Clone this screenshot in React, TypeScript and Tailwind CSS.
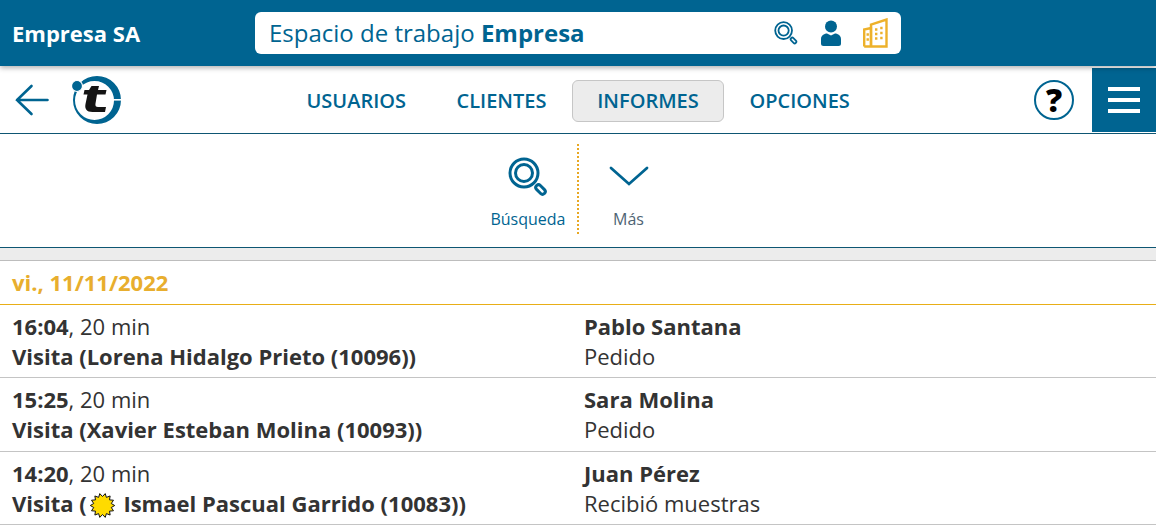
const font = { fontFamily: '"Open Sans", sans-serif' };

function SearchIcon({ className, sw }: { className: string; sw: number }) {
  return (
    <svg viewBox="0 0 40 40" className={className} fill="none" stroke="currentColor" strokeWidth={sw}>
      <circle cx="16" cy="16" r="14" />
      <circle cx="16" cy="16" r="8.500" />
      <rect x="-2.700" y="-5.500" width="5.400" height="11" rx="2.600" transform="translate(32.500 32.500) rotate(-45)" />
    </svg>
  );
}

function Logo() {
  return (
    <svg viewBox="0 0 50 50" className="h-[50px] w-[50px]">
      <path
        fillRule="evenodd"
        fill="#006491"
        d="M25 1 A24 24 0 1 1 25 49 A24 24 0 1 1 25 1 Z M22.500 6 A19.500 19.500 0 1 0 22.500 45 A19.500 19.500 0 1 0 22.500 6 Z"
      />
      <rect x="40" y="24" width="10" height="1.600" fill="#fff" />
      <circle cx="5" cy="11" r="5.500" fill="#006491" stroke="#fff" strokeWidth="1.200" />
      <path
        d="M19.500 11 H27 L26 15 H34.500 L33.500 19.500 H25 L23.500 28.500 C23 31 24 32 26 32 H34 L33 37 H20.500 C14.500 37 12.500 33.500 13.500 29 L15.500 19.500 H11.500 L12.500 15 H17 Z"
        fill="#141414"
      />
    </svg>
  );
}

function Building() {
  return (
    <svg viewBox="0 0 25 30" className="h-[30px] w-[25px]" fill="none" stroke="#edb12b" strokeWidth="2.400">
      <path d="M1.200 28.500 V11.500 L8 10 V28.500" />
      <path d="M8 28.500 V6.500 L23.500 1.500 V28.500 H1.200" />
      <path d="M3.500 16.500h2.400M3.500 21.500h2.400M12 11.500h2.400M17.200 10h2.400M12 16h2.400M17.200 15h2.400M12 20.500h2.400M17.200 20h2.400" strokeWidth="2.400" />
    </svg>
  );
}

function Sun() {
  const pts: string[] = [];
  for (let i = 0; i < 28; i++) {
    const r = i % 2 === 0 ? 12.200 : 9;
    const a = (i * Math.PI) / 14;
    pts.push(`${(12.500 + r * Math.cos(a)).toFixed(2)},${(12.500 + r * Math.sin(a)).toFixed(2)}`);
  }
  return (
    <svg viewBox="0 0 25 25" className="mx-[3px] inline-block h-[25px] w-[25px] align-[-6px]">
      <polygon points={pts.join(' ')} fill="#ffdb00" stroke="#111" strokeWidth="1" />
    </svg>
  );
}

const navItems = ['USUARIOS', 'CLIENTES', 'INFORMES', 'OPCIONES'];

const rows = [
  { time: '16:04', who: 'Pablo Santana', note: 'Pedido', title: <>Visita (Lorena Hidalgo Prieto (10096))</>, h: 'h-[73px]' },
  { time: '15:25', who: 'Sara Molina', note: 'Pedido', title: <>Visita (Xavier Esteban Molina (10093))</>, h: 'h-[74px] pb-[2px]' },
  { time: '14:20', who: 'Juan Pérez', note: 'Recibió muestras', title: <>Visita (<Sun /> Ismael Pascual Garrido (10083))</>, h: 'h-[73px]' },
];

export default function App() {
  return (
    <div className="h-[527px] w-[1156px] overflow-hidden bg-white" style={font}>
      <header className="relative z-10 flex h-[66px] items-center bg-[#006491] shadow-[0_2px_5px_rgba(0,0,0,0.3)]">
        <div className="w-[255px] pl-3 text-[22px] font-bold text-white">Empresa SA</div>
        <div className="flex h-[42px] w-[646px] items-center rounded-[6px] bg-white pl-[14px] pr-[13px]">
          <div className="flex-1 text-[24px] text-[#006491]">
            Espacio de trabajo <span className="font-bold">Empresa</span>
          </div>
          <SearchIcon className="h-[24px] w-[24px] text-[#006491]" sw={3} />
          <svg viewBox="0 0 20 26" className="ml-[23px] h-[26px] w-[20px]" fill="#006491">
            <circle cx="10" cy="6.500" r="6" />
            <path d="M0 23.500 V19 C0 15 4 13.500 6 13.500 L10 15.500 L14 13.500 C16 13.500 20 15 20 19 V23.500 Q20 26 17.500 26 H2.500 Q0 26 0 23.500 Z" />
          </svg>
          <div className="ml-[22px]">
            <Building />
          </div>
        </div>
      </header>

      <nav className="flex h-[68px] border-b border-[#0e5673]">
        <div className="flex w-[281.500px] items-center pl-[15px]">
          <svg viewBox="0 0 34 32" className="h-[32px] w-[34px]" fill="none" stroke="#006491" strokeWidth="2.600" strokeLinecap="round">
            <path d="M32.500 16 H2 M16.500 2 L2 16 L16.500 30" />
          </svg>
          <div className="ml-[23px]">
            <Logo />
          </div>
        </div>
        <div className="flex items-center gap-[0.5px] pt-[2px] text-[20px] font-semibold text-[#006491]">
          {navItems.map((item) => (
            <div
              key={item}
              className={
                item === 'INFORMES'
                  ? 'flex h-[42px] w-[152px] items-center justify-center rounded-[6px] border border-[#c6c6c6] bg-[#ececec]'
                  : 'flex h-[42px] items-center justify-center px-[25px]'
              }
            >
              {item}
            </div>
          ))}
        </div>
        <div className="flex-1" />
        <div className="flex items-center pr-[18px]">
          <div className="flex h-[40px] w-[40px] items-center justify-center rounded-full border-[2.500px] border-[#006491] text-[32px] font-extrabold leading-none text-black">
            ?
          </div>
        </div>
        <div className="mb-[1px] flex h-[64px] w-[64px] flex-col items-center justify-center gap-[7px] self-end bg-[#006491]">
          <div className="h-[4px] w-[32px] bg-white" />
          <div className="h-[4px] w-[32px] bg-white" />
          <div className="h-[4px] w-[32px] bg-white" />
        </div>
      </nav>

      <div className="flex h-[114px] items-start justify-center border-b border-[#0e5673] pl-[1px] pt-[10px]">
        <div className="flex h-[90px] w-[98px] flex-col items-center pt-[13px] text-[#006491]">
          <SearchIcon className="h-[40px] w-[40px]" sw={3} />
          <div className="mt-[10px] text-[16px]">Búsqueda</div>
        </div>
        <div className="h-[90px] border-l-2 border-dotted border-[#e8a823]" />
        <div className="flex h-[90px] w-[99px] flex-col items-center pt-[13px] text-[#006491]">
          <svg viewBox="0 0 40 40" className="h-[40px] w-[40px]" fill="none" stroke="#006491" strokeWidth="2.800" strokeLinecap="round">
            <path d="M2 11 L20 27 L38 11" />
          </svg>
          <div className="mt-[10px] text-[16px] text-[#4e6474]">Más</div>
        </div>
      </div>

      <div className="h-[13px] border-b border-[#bdbdbd] bg-[#ececec]" />

      <div className="flex h-[44px] items-center border-b border-[#e8ae17] pl-3 text-[22px] font-bold text-[#e8ae2e]">
        vi., 11/11/2022
      </div>

      {rows.map((r) => (
        <div key={r.time} className={`flex ${r.h} items-center border-b border-[#c4c4c4] text-[22px] leading-[30px] text-[#333]`}>
          <div className="w-[584px] pl-3">
            <div>
              <span className="font-bold">{r.time}</span>, 20 min
            </div>
            <div className="font-bold">{r.title}</div>
          </div>
          <div>
            <div className="font-bold">{r.who}</div>
            <div>{r.note}</div>
          </div>
        </div>
      ))}
    </div>
  );
}
